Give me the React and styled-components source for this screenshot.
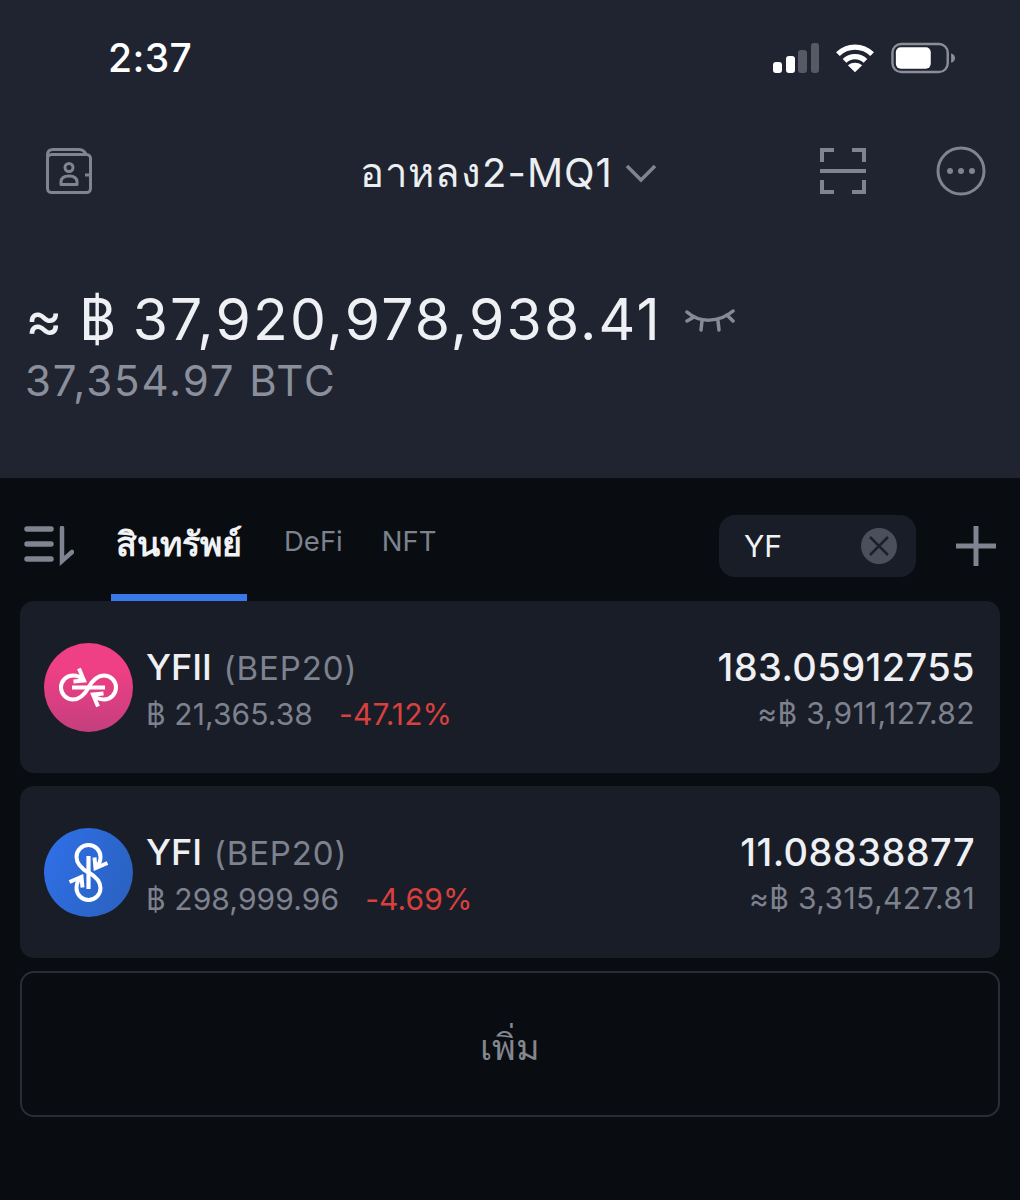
import React from "react";
import styled, { createGlobalStyle } from "styled-components";

const GlobalStyle = createGlobalStyle`
  html, body { margin: 0; padding: 0; background: #090c10; }
  body { font-family: Inter, "Noto Sans", "DejaVu Sans", sans-serif; }
`;

const Page = styled.div`
  width: 1020px;
  height: 1200px;
  overflow: hidden;
  background: #090c10;
`;

const Header = styled.header`
  height: 478px;
  background: #1f2430;
  box-sizing: border-box;
  padding-top: 32px;
`;

const StatusBar = styled.div`
  height: 52px;
  display: flex;
  align-items: center;
  justify-content: space-between;
  padding: 0 65px 0 108px;
`;

const Time = styled.span`
  font-size: 39px;
  font-weight: 500;
  letter-spacing: 0.4px;
  color: #fff;
  line-height: 52px;
`;

const StatusIcons = styled.div`
  display: flex;
  align-items: center;
  gap: 17px;
`;

const Nav = styled.nav`
  margin-top: 52px;
  height: 70px;
  display: flex;
  align-items: center;
  padding: 0 34px 0 46px;
`;

const WalletName = styled.div`
  flex: 1;
  display: flex;
  align-items: center;
  justify-content: center;
  gap: 12px;
  color: #eceef1;
  font-size: 40px;
  letter-spacing: 1px;
  padding: 4px 0 0 105px;
`;

const NavRight = styled.div`
  display: flex;
  align-items: center;
  gap: 70px;
`;

const Balance = styled.section`
  margin-top: 78px;
  padding-left: 25px;
`;

const BalanceRow = styled.div`
  display: flex;
  align-items: center;
  gap: 23px;
  height: 70px;
  color: #eef0f3;
  font-size: 57px;
  letter-spacing: 2.15px;
  word-spacing: -4px;
`;

const EyeSlot = styled.div`
  display: flex;
  padding-top: 4px;
`;

const BtcValue = styled.div`
  color: #8a8f9b;
  font-size: 42px;
  letter-spacing: 1.9px;
  line-height: 52px;
  margin-top: 1px;
`;

const TabBar = styled.div`
  height: 123px;
  display: flex;
  padding: 0 24px 0 24px;
  box-sizing: border-box;
`;

const SortButton = styled.div`
  display: flex;
  align-items: center;
  height: 100%;
  width: 87px;
  padding-top: 12px;
  box-sizing: border-box;
`;

const Tab = styled.div`
  height: 100%;
  box-sizing: border-box;
  padding: ${(p) => (p.$active ? "16px 5px 0" : "10px 0 0")};
  margin-right: ${(p) => (p.$active ? "37px" : "39px")};
  display: flex;
  align-items: center;
  font-size: ${(p) => (p.$active ? "34px" : "27.5px")};
  font-weight: ${(p) => (p.$active ? 600 : 400)};
  color: ${(p) => (p.$active ? "#f1f2f4" : "#7d828e")};
  border-bottom: 7px solid ${(p) => (p.$active ? "#3a78ea" : "transparent")};
`;

const TabRight = styled.div`
  margin-left: auto;
  display: flex;
  align-items: center;
  gap: 40px;
  padding-top: 13px;
`;

const Search = styled.div`
  width: 197px;
  height: 62px;
  box-sizing: border-box;
  border-radius: 16px;
  background: #191d28;
  display: flex;
  align-items: center;
  justify-content: space-between;
  padding: 0 19px 0 25px;
  color: #f1f2f4;
  font-size: 30px;
`;

const List = styled.main`
  padding: 0 20px;
  display: flex;
  flex-direction: column;
  gap: 13px;
`;

const Card = styled.div`
  height: 172px;
  box-sizing: border-box;
  border-radius: 14px;
  background: #191d28;
  display: flex;
  align-items: center;
  padding: 6px 25px 0 24px;
`;

const LogoSlot = styled.div`
  display: flex;
  margin-top: -6px;
`;

const CoinInfo = styled.div`
  margin-left: 13px;
  flex: 1;
`;

const CoinName = styled.div`
  font-size: 36px;
  line-height: 46px;
  font-weight: 500;
  color: #eef0f3;
`;

const Network = styled.span`
  font-size: 33px;
  font-weight: 400;
  letter-spacing: 0.9px;
  color: #7d828e;
  margin-left: 2px;
`;

const PriceRow = styled.div`
  display: flex;
  gap: 26px;
  font-size: 30px;
  line-height: 46px;
  letter-spacing: 0.1px;
  color: #7d828e;
`;

const Change = styled.span`
  color: #d8403e;
`;

const Amounts = styled.div`
  text-align: right;
`;

const Amount = styled.div`
  font-size: 38px;
  line-height: 46px;
  font-weight: 500;
  letter-spacing: 0.4px;
  color: #eef0f3;
`;

const Fiat = styled.div`
  font-size: 30px;
  line-height: 46px;
  letter-spacing: 0.4px;
  color: #7d828e;
`;

const AddButton = styled.div`
  height: 146px;
  box-sizing: border-box;
  border: 2px solid #292d34;
  border-radius: 14px;
  display: flex;
  align-items: center;
  justify-content: center;
  padding-top: 6px;
  color: #83878f;
  font-size: 36px;
  font-weight: 500;
`;

const Signal = () => (
  <svg width="46" height="30" viewBox="0 0 46 30">
    <rect x="0" y="19" width="9" height="11" rx="3" fill="#fff" />
    <rect x="13" y="13" width="9" height="17" rx="3" fill="#fff" />
    <rect x="25" y="7" width="9" height="23" rx="3" fill="#565a65" />
    <rect x="38" y="0" width="8" height="30" rx="3" fill="#565a65" />
  </svg>
);

const Wifi = () => (
  <svg width="38" height="30" viewBox="0 0 40 30" fill="none" stroke="#fff" strokeWidth="5.5">
    <path d="M2 11C12 1 28 1 38 11" />
    <path d="M9 18C15 12 25 12 31 18" />
    <path d="M20 30L12.5 22.5C17 19 23 19 27.5 22.5Z" fill="#fff" stroke="none" />
  </svg>
);

const Battery = () => (
  <svg width="64" height="32" viewBox="0 0 66 32">
    <rect x="1.5" y="1.5" width="57" height="29" rx="9" fill="none" stroke="#8a8e98" strokeWidth="2.5" />
    <rect x="5" y="5" width="36" height="22" rx="5" fill="#fff" />
    <path d="M62 11C65 12 66 14 66 16C66 18 65 20 62 21Z" fill="#8a8e98" />
  </svg>
);

const WalletIcon = () => (
  <svg width="46" height="46" viewBox="0 0 46 46" fill="none" stroke="#7f8490" strokeWidth="3" strokeLinejoin="round">
    <path d="M1.5 9V7C1.5 3.5 3.5 1.5 7 1.5H33C37 1.5 39 3.5 40 7" />
    <rect x="1.5" y="6.5" width="43" height="38" rx="4" />
    <circle cx="23" cy="19.5" r="4" />
    <path d="M15 36.5V34C15 30 18 28 23 28C28 28 31 30 31 34V36.5Z" />
    <path d="M39 27H45" />
  </svg>
);

const ScanIcon = () => (
  <svg width="46" height="46" viewBox="0 0 46 46" fill="none" stroke="#7f8490" strokeWidth="4">
    <path d="M14 2H2V14" />
    <path d="M32 2H44V14" />
    <path d="M14 44H2V32" />
    <path d="M32 44H44V32" />
    <path d="M0 23H46" />
  </svg>
);

const MoreIcon = () => (
  <svg width="50" height="50" viewBox="0 0 50 50" fill="none">
    <circle cx="25" cy="25" r="23" stroke="#7f8490" strokeWidth="3" />
    <circle cx="14" cy="25" r="3" fill="#7f8490" />
    <circle cx="25" cy="25" r="3" fill="#7f8490" />
    <circle cx="36" cy="25" r="3" fill="#7f8490" />
  </svg>
);

const Chevron = () => (
  <svg width="32" height="20" viewBox="0 0 32 20" fill="none" stroke="#7f8490" strokeWidth="3.5">
    <path d="M2 3L16 17L30 3" />
  </svg>
);

const EyeIcon = () => (
  <svg width="50" height="24" viewBox="0 0 50 24" fill="none" stroke="#858a96" strokeWidth="3.5" strokeLinecap="round">
    <path d="M2 3C14 14 34 14 48 2" />
    <path d="M2 12L9 8" />
    <path d="M16 21L17 12" />
    <path d="M34 21L33 12" />
    <path d="M48 12L42 6" />
  </svg>
);

const SortIcon = () => (
  <svg width="50" height="40" viewBox="0 0 50 40" fill="none" stroke="#7f8490" strokeWidth="5.5" strokeLinecap="round">
    <path d="M3 3H27" />
    <path d="M3 18H27" />
    <path d="M3 33H27" />
    <path d="M38 2V35L48 26" strokeWidth="4.5" />
  </svg>
);

const ClearIcon = () => (
  <svg width="36" height="36" viewBox="0 0 36 36">
    <circle cx="18" cy="18" r="18" fill="#4b4f5b" />
    <path d="M9 9L27 27M27 9L9 27" stroke="#1c202a" strokeWidth="2.5" />
  </svg>
);

const PlusIcon = () => (
  <svg width="40" height="40" viewBox="0 0 40 40" stroke="#7f8490" strokeWidth="5">
    <path d="M20 0V40M0 20H40" />
  </svg>
);

const YearnLoop = () => (
  <>
    <path d="M45 45C38 41 32.5 36 32.5 29A12 12 0 0 1 56.5 29C56.5 33 55 37 51.5 40" />
    <path d="M50.5 29.5L51.5 40L63.5 35" />
  </>
);

// yearn mark: two loops and a bar, YFII shows it turned a quarter
const YearnMark = ({ rotate }) => (
  <g fill="none" stroke="#fff" strokeWidth="4" transform={`rotate(${rotate} 44.5 44.5)`}>
    <path d="M44.5 28V61" strokeWidth="4.2" />
    <YearnLoop />
    <g transform="rotate(180 44.5 44.5)">
      <YearnLoop />
    </g>
  </g>
);

const YfiiLogo = () => (
  <svg width="89" height="89" viewBox="0 0 89 89">
    <defs>
      <linearGradient id="yfiiGrad" x1="0.5" y1="0.3" x2="0.5" y2="1">
        <stop offset="0" stopColor="#ef3f85" />
        <stop offset="1" stopColor="#c43f7e" />
      </linearGradient>
    </defs>
    <circle cx="44.5" cy="44.5" r="44.5" fill="url(#yfiiGrad)" />
    <YearnMark rotate={90} />
  </svg>
);

const YfiLogo = () => (
  <svg width="89" height="89" viewBox="0 0 89 89">
    <defs>
      <linearGradient id="yfiGrad" x1="0" y1="0.3" x2="1" y2="0.7">
        <stop offset="0" stopColor="#2f6fe6" />
        <stop offset="1" stopColor="#2a62c0" />
      </linearGradient>
    </defs>
    <circle cx="44.5" cy="44.5" r="44.5" fill="url(#yfiGrad)" />
    <YearnMark rotate={0} />
  </svg>
);

const coins = [
  { name: "YFII", logo: <YfiiLogo />, price: "฿ 21,365.38", change: "-47.12%", amount: "183.05912755", fiat: "≈฿ 3,911,127.82" },
  { name: "YFI", logo: <YfiLogo />, price: "฿ 298,999.96", change: "-4.69%", amount: "11.08838877", fiat: "≈฿ 3,315,427.81" },
];

export default function App() {
  return (
    <Page>
      <GlobalStyle />
      <Header>
        <StatusBar>
          <Time>2:37</Time>
          <StatusIcons>
            <Signal />
            <Wifi />
            <Battery />
          </StatusIcons>
        </StatusBar>
        <Nav>
          <WalletIcon />
          <WalletName>
            อาหลง2-MQ1
            <Chevron />
          </WalletName>
          <NavRight>
            <ScanIcon />
            <MoreIcon />
          </NavRight>
        </Nav>
        <Balance>
          <BalanceRow>
            ≈ ฿ 37,920,978,938.41
            <EyeSlot>
              <EyeIcon />
            </EyeSlot>
          </BalanceRow>
          <BtcValue>37,354.97 BTC</BtcValue>
        </Balance>
      </Header>
      <TabBar>
        <SortButton>
          <SortIcon />
        </SortButton>
        <Tab $active>สินทรัพย์</Tab>
        <Tab>DeFi</Tab>
        <Tab>NFT</Tab>
        <TabRight>
          <Search>
            YF
            <ClearIcon />
          </Search>
          <PlusIcon />
        </TabRight>
      </TabBar>
      <List>
        {coins.map((c) => (
          <Card key={c.name}>
            <LogoSlot>{c.logo}</LogoSlot>
            <CoinInfo>
              <CoinName>
                {c.name} <Network>(BEP20)</Network>
              </CoinName>
              <PriceRow>
                <span>{c.price}</span>
                <Change>{c.change}</Change>
              </PriceRow>
            </CoinInfo>
            <Amounts>
              <Amount>{c.amount}</Amount>
              <Fiat>{c.fiat}</Fiat>
            </Amounts>
          </Card>
        ))}
        <AddButton>เพิ่ม</AddButton>
      </List>
    </Page>
  );
}
